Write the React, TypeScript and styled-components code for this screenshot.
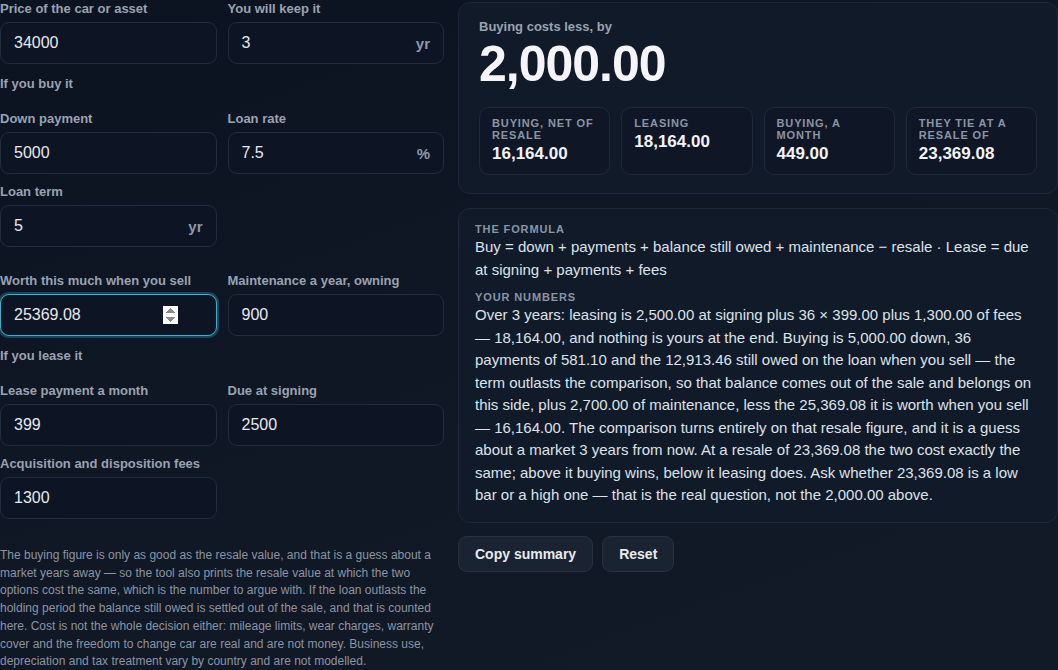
import { createGlobalStyle } from "styled-components"
import styled from "styled-components"

const GlobalStyle = createGlobalStyle`
  html, body {
    margin: 0;
    padding: 0;
  }

  body {
    background: linear-gradient(160deg, #0c1320 0%, #101725 55%, #121a28 100%);
    color: #e5e8ee;
    font-family: "Liberation Sans", Arial, sans-serif;
    min-height: 100vh;
  }
`

const Page = styled.div`
  display: grid;
  grid-template-columns: 444px minmax(0, 1fr);
  column-gap: 14px;
  align-items: start;
  width: 1058px;
  height: 670px;
  overflow: hidden;
`

const FormColumn = styled.div`
  display: flex;
  flex-direction: column;
  min-width: 0;
`

const FieldGrid = styled.div`
  display: grid;
  grid-template-columns: repeat(2, minmax(0, 1fr));
  column-gap: 11px;
  row-gap: 9px;
`

const Field = styled.label<{ $lead?: boolean }>`
  display: flex;
  flex-direction: column;
  gap: 5px;
  min-width: 0;
  margin-top: ${(p) => (p.$lead ? "16px" : "0")};
`

const FieldLabel = styled.span`
  padding-top: 1px;
  font-size: 13px;
  font-weight: bold;
  line-height: 16px;
  color: #99a2b1;
`

const SectionTitle = styled.div`
  font-size: 13px;
  font-weight: bold;
  line-height: 16px;
  color: #99a2b1;
  margin: 12px 0 18px;
`

const InputBox = styled.div`
  position: relative;
  height: 42px;
  box-sizing: border-box;
  border: 1px solid #222c3c;
  border-radius: 9px;
  background: #0d1524;
  display: flex;
  align-items: center;

  &:focus-within {
    border-color: #39b1cf;
    box-shadow: 0 0 0 2px rgba(57, 177, 207, 0.3);
  }
`

const NumberInput = styled.input`
  flex: 1;
  width: 100%;
  min-width: 0;
  height: 100%;
  box-sizing: border-box;
  padding: 0 38px 0 13px;
  border: none;
  outline: none;
  background: transparent;
  color: #e6e9ef;
  font-family: inherit;
  font-size: 16px;

  &:not(:focus)::-webkit-inner-spin-button {
    -webkit-appearance: none;
    margin: 0;
  }
`

const Unit = styled.span`
  position: absolute;
  right: 13px;
  top: 50%;
  transform: translateY(-45%);
  font-size: 15px;
  font-weight: bold;
  color: #8f98a8;
  pointer-events: none;
`

const Footnote = styled.p`
  margin: 28px 0 0;
  font-family: "Liberation Sans Narrow", "Arial Narrow", "Liberation Sans", sans-serif;
  font-size: 12px;
  line-height: 17.7px;
  color: #8c94a3;
`

const ResultColumn = styled.div`
  display: flex;
  flex-direction: column;
  gap: 14px;
  padding-top: 2px;
  min-width: 0;
`

const Panel = styled.section`
  background: #111a29;
  border: 1px solid #1e2838;
  border-radius: 12px;
`

const Summary = styled(Panel)`
  padding: 16px 20px 18px;
`

const Kicker = styled.div`
  font-size: 13px;
  font-weight: bold;
  line-height: 16px;
  color: #99a2b1;
`

const BigNumber = styled.div`
  margin-top: 2px;
  font-size: 50px;
  font-weight: bold;
  line-height: 55px;
  letter-spacing: -1px;
  color: #f3f5f8;
`

const StatGrid = styled.div`
  display: grid;
  grid-template-columns: repeat(4, minmax(0, 1fr));
  gap: 11px;
  margin-top: 15px;
`

const Stat = styled.div`
  border: 1px solid #1f2939;
  border-radius: 10px;
  background: #0f1727;
  padding: 9px 12px 10px;
  min-height: 67px;
  box-sizing: border-box;
`

const Caps = styled.div`
  font-size: 11px;
  font-weight: bold;
  line-height: 12px;
  letter-spacing: 0.08em;
  text-transform: uppercase;
  color: #8b94a3;
`

const StatValue = styled.div`
  margin-top: 3px;
  font-size: 17px;
  font-weight: bold;
  line-height: 20px;
  color: #f1f3f7;
`

const Explain = styled(Panel)`
  padding: 13px 18px 15px 16px;
`

const ExplainTitle = styled(Caps)<{ $gap?: boolean }>`
  line-height: 14px;
  margin-top: ${(p) => (p.$gap ? "9px" : "0")};
`

const ExplainText = styled.p`
  margin: 0;
  font-size: 15px;
  line-height: 22.5px;
  color: #dde2ea;
`

const Actions = styled.div`
  display: flex;
  gap: 9px;
  margin-top: -1px;
`

const Button = styled.button`
  height: 36px;
  padding: 0 16px;
  border: 1px solid #28323f;
  border-radius: 9px;
  background: #1a2332;
  color: #e8ebf0;
  font-family: inherit;
  font-size: 14px;
  font-weight: bold;
  cursor: pointer;
`

type InputProps = {
  label: string
  value: string
  unit?: string
  lead?: boolean
  focus?: boolean
}

function NumberField({ label, value, unit, lead, focus }: InputProps) {
  return (
    <Field $lead={lead}>
      <FieldLabel>{label}</FieldLabel>
      <InputBox>
        <NumberInput type="number" defaultValue={value} autoFocus={focus} />
        {unit && <Unit>{unit}</Unit>}
      </InputBox>
    </Field>
  )
}

const stats = [
  { label: "Buying, net of resale", value: "16,164.00" },
  { label: "Leasing", value: "18,164.00" },
  { label: "Buying, a month", value: "449.00" },
  { label: "They tie at a resale of", value: "23,369.08" },
]

export default function App() {
  return (
    <>
      <GlobalStyle />
      <Page>
        <FormColumn>
          <FieldGrid>
            <NumberField label="Price of the car or asset" value="34000" />
            <NumberField label="You will keep it" value="3" unit="yr" />
          </FieldGrid>

          <SectionTitle>If you buy it</SectionTitle>
          <FieldGrid>
            <NumberField label="Down payment" value="5000" />
            <NumberField label="Loan rate" value="7.5" unit="%" />
            <NumberField label="Loan term" value="5" unit="yr" />
            <div />
            <NumberField label="Worth this much when you sell" value="25369.08" lead focus />
            <NumberField label="Maintenance a year, owning" value="900" lead />
          </FieldGrid>

          <SectionTitle>If you lease it</SectionTitle>
          <FieldGrid>
            <NumberField label="Lease payment a month" value="399" />
            <NumberField label="Due at signing" value="2500" />
            <NumberField label="Acquisition and disposition fees" value="1300" />
          </FieldGrid>

          <Footnote>
            The buying figure is only as good as the resale value, and that is a guess about a market years away — so
            the tool also prints the resale value at which the two options cost the same, which is the number to argue
            with. If the loan outlasts the holding period the balance still owed is settled out of the sale, and that
            is counted here. Cost is not the whole decision either: mileage limits, wear charges, warranty cover and
            the freedom to change car are real and are not money. Business use, depreciation and tax treatment vary by
            country and are not modelled.
          </Footnote>
        </FormColumn>

        <ResultColumn>
          <Summary>
            <Kicker>Buying costs less, by</Kicker>
            <BigNumber>2,000.00</BigNumber>
            <StatGrid>
              {stats.map((s) => (
                <Stat key={s.label}>
                  <Caps>{s.label}</Caps>
                  <StatValue>{s.value}</StatValue>
                </Stat>
              ))}
            </StatGrid>
          </Summary>

          <Explain>
            <ExplainTitle>The formula</ExplainTitle>
            <ExplainText>
              Buy = down + payments + balance still owed + maintenance − resale · Lease = due at signing + payments +
              fees
            </ExplainText>
            <ExplainTitle $gap>Your numbers</ExplainTitle>
            <ExplainText>
              Over 3 years: leasing is 2,500.00 at signing plus 36 × 399.00 plus 1,300.00 of fees — 18,164.00, and
              nothing is yours at the end. Buying is 5,000.00 down, 36 payments of 581.10 and the 12,913.46 still owed
              on the loan when you sell — the term outlasts the comparison, so that balance comes out of the sale and
              belongs on this side, plus 2,700.00 of maintenance, less the 25,369.08 it is worth when you sell —
              16,164.00. The comparison turns entirely on that resale figure, and it is a guess about a market 3 years
              from now. At a resale of 23,369.08 the two cost exactly the same; above it buying wins, below it leasing
              does. Ask whether 23,369.08 is a low bar or a high one — that is the real question, not the 2,000.00
              above.
            </ExplainText>
          </Explain>

          <Actions>
            <Button>Copy summary</Button>
            <Button>Reset</Button>
          </Actions>
        </ResultColumn>
      </Page>
    </>
  )
}
